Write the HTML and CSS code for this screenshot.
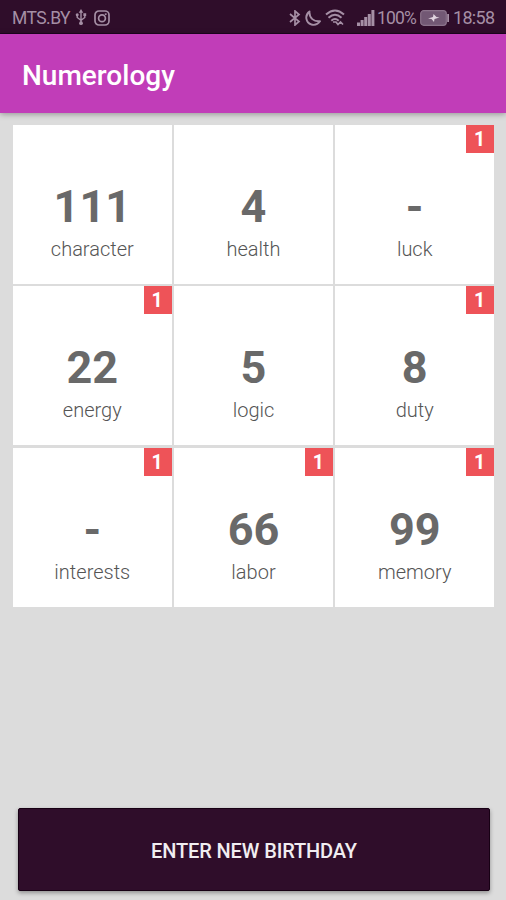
FILE: index.html
```
<!DOCTYPE html>
<html lang="en">
<head>
<meta charset="utf-8">
<title>Numerology</title>
<link rel="stylesheet" href="styles.css">
</head>
<body>
<div class="status">
  <span class="carrier">MTS.BY</span>
  <svg class="usb" width="12" height="17" viewBox="0 0 12 18"><path d="M6 3v12M2 6v3l4 3 4-3V6" fill="none" stroke="currentColor" stroke-width="1.5"/><path d="M6 0l2.4 4H3.6z"/><circle cx="2" cy="6" r="1.6"/><path d="M8.5 4.5h3v3h-3z"/><circle cx="6" cy="15" r="2"/></svg>
  <svg class="insta" width="16" height="16" viewBox="0 0 16 16" fill="none" stroke="currentColor" stroke-width="1.7"><rect x="1" y="1" width="14" height="14" rx="4"/><circle cx="8" cy="8.2" r="3.4"/><path d="M10.800 4.200h1.800"/></svg>
  <span class="spacer"></span>
  <svg class="bt" width="12" height="16" viewBox="0 0 12 16" fill="none" stroke="currentColor" stroke-width="1.7"><path d="M1 4l9 7.500L6 15V1l4 3.500L1 12"/></svg>
  <svg class="moon" width="16" height="16" viewBox="0 0 16 16" fill="none" stroke="currentColor" stroke-width="1.900" stroke-linejoin="round"><path d="M4.500 1.500C-.5 5 .5 12.500 6.500 14.500c3.500 1 6.500-.5 8.500-3.300C9 12 4 8 4.500 1.500z"/></svg>
  <svg class="wifi" width="20" height="17" viewBox="0 0 20 17" fill="none" stroke="currentColor" stroke-width="2"><path d="M1 5.500q9-8 18 0M3.500 8.700q6.500-6 13 0M6.300 11.800q3.700-3.500 7.400 0"/><path d="M8 13h3l2 2.500 2.500-2.500 2.500 2.500" stroke-width="1.700"/></svg>
  <svg class="signal" width="18" height="16" viewBox="0 0 18 16"><path d="M0 12.500h3V16H0zM3.600 10h3v6h-3zM7.200 7h3v9h-3zM10.800 4h3v12h-3zM14.400 0h3v16h-3z"/></svg>
  <span class="percent">100%</span>
  <svg class="battery" width="29" height="16" viewBox="0 0 29 16"><rect x=".7" y=".7" width="25.600" height="14.600" rx="3" fill="#725874" stroke="#8b738b" stroke-width="1.200"/><path d="M27.200 4H29v8h-1.800z"/><path d="M8 8.500l5-1.500.5-3 3 3 3 .5-5 1.500-.5 3-2.500-3z" fill="#e0d4df"/></svg>
  <span class="clock">18:58</span>
</div>
<header class="appbar"><h1>Numerology</h1></header>
<main class="content">
  <div class="grid">
    <section class="cell"><b class="value">111</b><span class="label">character</span></section>
    <section class="cell"><b class="value">4</b><span class="label">health</span></section>
    <section class="cell"><i class="badge">1</i><b class="value">-</b><span class="label">luck</span></section>
    <section class="cell"><i class="badge">1</i><b class="value">22</b><span class="label">energy</span></section>
    <section class="cell"><b class="value">5</b><span class="label">logic</span></section>
    <section class="cell"><i class="badge">1</i><b class="value">8</b><span class="label">duty</span></section>
    <section class="cell"><i class="badge">1</i><b class="value">-</b><span class="label">interests</span></section>
    <section class="cell"><i class="badge">1</i><b class="value">66</b><span class="label">labor</span></section>
    <section class="cell"><i class="badge">1</i><b class="value">99</b><span class="label">memory</span></section>
  </div>
  <button class="action">ENTER NEW BIRTHDAY</button>
</main>
</body>
</html>
```
FILE: styles.css
```
* { box-sizing: border-box; }
body {
  margin: 0;
  height: 900px;
  display: flex;
  flex-direction: column;
  overflow: hidden;
  background: #dcdcdc;
  font-family: Roboto, "Liberation Sans", sans-serif;
}
.status {
  height: 34px;
  flex: none;
  display: flex;
  align-items: center;
  padding: 2px 10px 0 12px;
  background: #2f0d2a;
  border-bottom: 1px solid #1d0420;
  color: #a58fa5;
  font-size: 18px;
}
.status svg { flex: none; fill: currentColor; }
.status svg[fill="none"] { fill: none; }
.carrier { width: 60px; font-size: 17.5px; letter-spacing: -.55px; }
.usb { margin-left: 3px; }
.insta { margin-left: 7px; }
.spacer { flex: 1; }
.moon { margin-left: 4px; }
.wifi { margin-left: 4px; }
.signal { margin-left: 12px; }
.percent { width: 41px; margin-left: 2px; font-size: 17.5px; letter-spacing: -.8px; }
.battery { margin-left: 2px; }
.clock { width: 43px; margin-left: 4px; font-size: 18px; letter-spacing: -.7px; white-space: nowrap; }
.appbar {
  position: relative;
  height: 79px;
  flex: none;
  display: flex;
  align-items: center;
  padding: 4px 23px 0 22px;
  background: #c13db8;
  box-shadow: 0 1px 6px rgba(0, 0, 0, .35);
}
h1 { margin: 0; color: #fff; font-size: 28px; line-height: 36px; font-weight: 500; }
.content {
  flex: 1;
  display: flex;
  flex-direction: column;
  justify-content: space-between;
  padding: 12px 12px 9px 13px;
}
.grid {
  display: grid;
  grid-template-columns: repeat(3, 1fr);
  grid-auto-rows: 158.8px;
  gap: 2.6px;
}
.cell {
  position: relative;
  display: flex;
  flex-direction: column;
  align-items: center;
  padding-top: 55px;
  background: #fff;
}
.value { color: #696969; font-size: 45px; line-height: 54px; font-weight: 700; }
.label { color: #555; font-size: 20px; line-height: 24px; margin-top: 3px; font-weight: 300; }
.badge {
  position: absolute;
  top: 0;
  right: 0;
  width: 28px;
  height: 28px;
  padding-right: 1px;
  background: #ee5358;
  color: #fff;
  font-size: 19.5px;
  line-height: 30px;
  font-style: normal;
  font-weight: 700;
  text-align: center;
}
.action {
  height: 83px;
  margin: 0 4px 0 5px;
  padding: 2px 0 0;
  border: 1px solid #170014;
  border-radius: 2px;
  background: #2f0d2a;
  box-shadow: 0 2px 4px rgba(0, 0, 0, .35);
  color: #f1edf1;
  font: 500 20px Roboto, "Liberation Sans", sans-serif;
  letter-spacing: -.12px;
}
```
